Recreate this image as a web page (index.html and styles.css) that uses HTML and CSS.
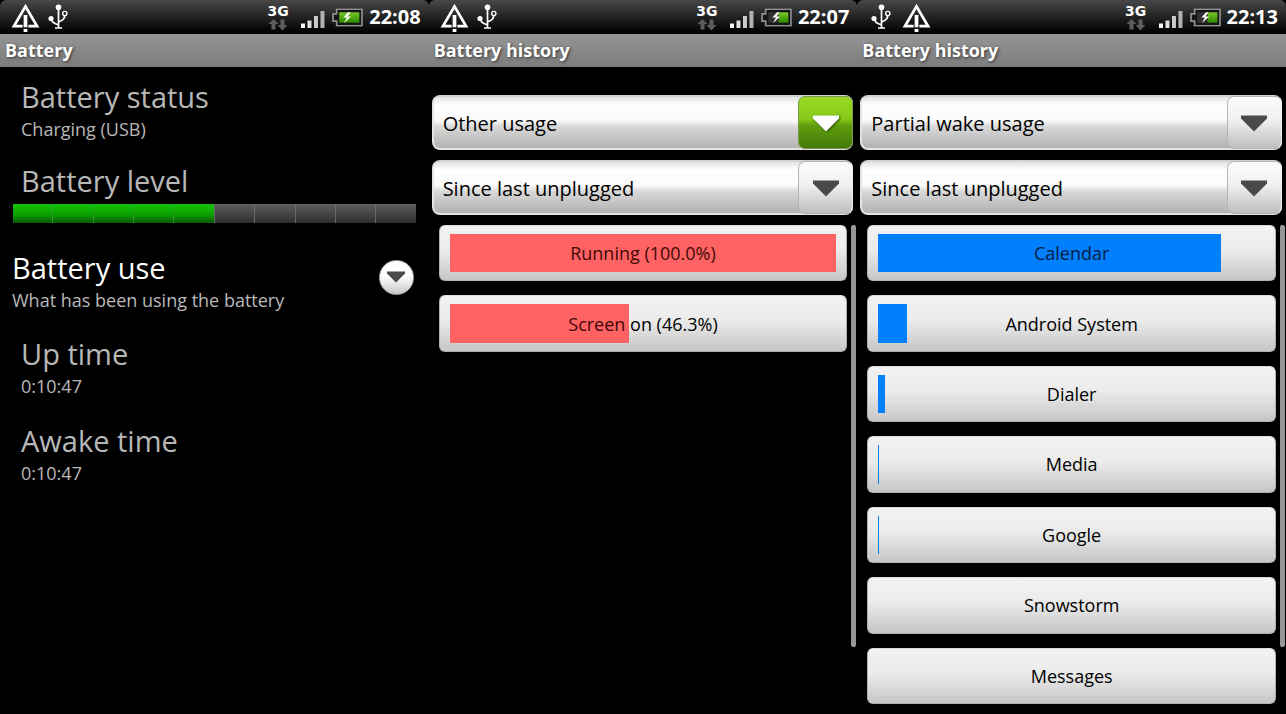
FILE: index.html
```html
<!DOCTYPE html>
<html lang="en">
<head>
<meta charset="utf-8">
<title>Battery</title>
<link rel="stylesheet" href="styles.css">
</head>
<body>
<svg class="defs" aria-hidden="true">
  <defs>
    <linearGradient id="cell" x1="0" y1="0" x2="0" y2="1">
      <stop offset="0" stop-color="#7ccb2c"/><stop offset=".5" stop-color="#4ea80e"/><stop offset="1" stop-color="#2f8a00"/>
    </linearGradient>
    <linearGradient id="signal-fill" x1="0" y1="0" x2="1" y2="0">
      <stop offset="0" stop-color="#fff"/><stop offset="1" stop-color="#aaa"/>
    </linearGradient>
    <symbol id="alert" viewBox="0 0 28 28">
      <path d="M14 3.200 L25.200 22.400 H2.800 Z" fill="none" stroke="#fff" stroke-width="2.600"/>
      <path d="M11.200 13h5.600v14h-5.600z" fill="#181818"/>
      <path d="M12.200 11.500h3.600v12h-3.600zM12.200 25h3.600v3h-3.600z" fill="#fff"/>
    </symbol>
    <symbol id="usb" viewBox="0 0 20 26">
      <path d="M10.500 3v21M3 14c0 4 3 5.500 7.500 7M16.500 10c1 4-1.500 6.500-6 8M7 24h7" fill="none" stroke="#fff" stroke-width="1.700"/>
      <circle cx="10.500" cy="3.200" r="2.800" fill="#fff"/>
      <circle cx="3" cy="14.500" r="2.600" fill="#fff"/>
      <circle cx="16.800" cy="9.500" r="2.100" fill="#222" stroke="#fff" stroke-width="1.400"/>
    </symbol>
    <symbol id="traffic" viewBox="0 0 20 13">
      <path d="M5.500 1l5 5H7.500v5.500h-4V6H0.500zM14.500 12.500l-5-5.500h3V1.500h4V7h3z" fill="#5c5c5c"/>
    </symbol>
    <symbol id="signal" viewBox="0 0 24 18">
      <path d="M0 13.500h4V18H0zM6.500 10.500h4V18h-4zM13 6h4v12h-4zM19.500 1h4v17h-4z" fill="url(#signal-fill)"/>
    </symbol>
    <symbol id="battery-frame" viewBox="0 0 30 18">
      <path d="M4.500 1h24.500v16H4.500v-4.500H1v-7h3.500z" fill="#151515" stroke="#929292" stroke-width="1.600"/>
    </symbol>
    <symbol id="bolt" viewBox="0 0 30 18">
      <path d="M15.500 4l-4.500 5h3.500l-3 5.500 7-6.500h-3.500l3-4z" fill="#fff"/>
    </symbol>
  </defs>
</svg>
<main class="screens">

  <section class="screen">
    <header class="status">
      <div class="notices"><svg class="alert"><use href="#alert"/></svg><svg class="usb"><use href="#usb"/></svg></div>
      <div class="network"><span>3G</span><svg class="traffic"><use href="#traffic"/></svg></div>
      <svg class="signal"><use href="#signal"/></svg>
      <svg class="battery" viewBox="0 0 30 18"><use href="#battery-frame"/><path d="M7 4h19.500v10H7z" fill="url(#cell)"/><use href="#bolt"/></svg>
      <time class="clock">22:08</time>
    </header>
    <h1 class="title">Battery</h1>
    <div class="settings">
      <div class="setting"><h2 class="name">Battery status</h2><p class="value">Charging (USB)</p></div>
      <div class="setting level">
        <h2 class="name" id="level">Battery level</h2>
        <div class="cells" role="img" aria-labelledby="level">
          <i class="cell on"></i><i class="cell on"></i><i class="cell on"></i><i class="cell on"></i><i class="cell on"></i><i class="cell"></i><i class="cell"></i><i class="cell"></i><i class="cell"></i><i class="cell"></i>
        </div>
      </div>
      <button class="setting use" type="button">
        <span class="texts"><span class="name">Battery use</span><span class="value">What has been using the battery</span></span>
        <span class="more"><svg class="small-arrow" viewBox="0 0 20 12"><path d="M1 0.500h18v2L10 11.500 1 2.500z" fill="#4b4b4b"/></svg></span>
      </button>
      <div class="setting"><h2 class="name">Up time</h2><p class="value">0:10:47</p></div>
      <div class="setting"><h2 class="name">Awake time</h2><p class="value">0:10:47</p></div>
    </div>
  </section>

  <section class="screen">
    <header class="status">
      <div class="notices"><svg class="alert"><use href="#alert"/></svg><svg class="usb"><use href="#usb"/></svg></div>
      <div class="network"><span>3G</span><svg class="traffic"><use href="#traffic"/></svg></div>
      <svg class="signal"><use href="#signal"/></svg>
      <svg class="battery" viewBox="0 0 30 18"><use href="#battery-frame"/><path d="M7 4h10v10H7z" fill="#333"/><path d="M17 4h9.500v10H17z" fill="url(#cell)"/><use href="#bolt"/></svg>
      <time class="clock">22:07</time>
    </header>
    <h1 class="title">Battery history</h1>
    <div class="history">
      <div class="picker active">
        <select class="select" aria-label="Usage type"><option>Other usage</option></select>
        <span class="drop"><svg class="arrow" viewBox="0 0 28 17"><path d="M1 .5h26v3L14 16.500 1 3.500z" fill="currentColor"/></svg></span>
      </div>
      <div class="picker">
        <select class="select" aria-label="Period"><option>Since last unplugged</option></select>
        <span class="drop"><svg class="arrow" viewBox="0 0 28 17"><path d="M1 .5h26v3L14 16.500 1 3.500z" fill="currentColor"/></svg></span>
      </div>
      <div class="scroller">
        <div class="list red">
          <button class="item" type="button"><span class="track"><span class="bar" style="width:100%"></span><span class="label"><span class="tinted">Running (100.0%)</span></span></span></button>
          <button class="item" type="button"><span class="track"><span class="bar" style="width:46.3%"></span><span class="label"><span class="tinted">Screen</span> on (46.3%)</span></span></button>
        </div>
        <div class="scrollbar"></div>
      </div>
    </div>
  </section>

  <section class="screen">
    <header class="status">
      <div class="notices usb-first"><svg class="usb"><use href="#usb"/></svg><svg class="alert"><use href="#alert"/></svg></div>
      <div class="network"><span>3G</span><svg class="traffic"><use href="#traffic"/></svg></div>
      <svg class="signal"><use href="#signal"/></svg>
      <svg class="battery" viewBox="0 0 30 18"><use href="#battery-frame"/><path d="M7 4h10v10H7z" fill="#333"/><path d="M17 4h9.500v10H17z" fill="url(#cell)"/><use href="#bolt"/></svg>
      <time class="clock">22:13</time>
    </header>
    <h1 class="title">Battery history</h1>
    <div class="history">
      <div class="picker">
        <select class="select" aria-label="Usage type"><option>Partial wake usage</option></select>
        <span class="drop"><svg class="arrow" viewBox="0 0 28 17"><path d="M1 .5h26v3L14 16.500 1 3.500z" fill="currentColor"/></svg></span>
      </div>
      <div class="picker">
        <select class="select" aria-label="Period"><option>Since last unplugged</option></select>
        <span class="drop"><svg class="arrow" viewBox="0 0 28 17"><path d="M1 .5h26v3L14 16.500 1 3.500z" fill="currentColor"/></svg></span>
      </div>
      <div class="scroller">
        <div class="list blue">
          <button class="item" type="button"><span class="track"><span class="bar" style="width:88.6%"></span><span class="label"><span class="tinted">Calendar</span></span></span></button>
          <button class="item" type="button"><span class="track"><span class="bar" style="width:7.4%"></span><span class="label">Android System</span></span></button>
          <button class="item" type="button"><span class="track"><span class="bar" style="width:1.8%"></span><span class="label">Dialer</span></span></button>
          <button class="item" type="button"><span class="track"><span class="bar" style="width:0.3%"></span><span class="label">Media</span></span></button>
          <button class="item" type="button"><span class="track"><span class="bar" style="width:0.3%"></span><span class="label">Google</span></span></button>
          <button class="item" type="button"><span class="track"><span class="label">Snowstorm</span></span></button>
          <button class="item" type="button"><span class="track"><span class="label">Messages</span></span></button>
        </div>
        <div class="scrollbar"></div>
      </div>
    </div>
  </section>

</main>
</body>
</html>
```

FILE: styles.css
```css
* { box-sizing: border-box; }

body {
  margin: 0;
  background: #000;
  color: #b8b8b8;
  font-family: "Open Sans", "Noto Sans", sans-serif;
}

h1, h2, p { margin: 0; font-weight: 400; }
button, select { font-family: inherit; border: 0; padding: 0; margin: 0; }
.defs { position: absolute; width: 0; height: 0; }

.screens {
  display: grid;
  grid-template-columns: repeat(3, minmax(0, 1fr));
  min-height: 100vh;
}

.screen { display: flex; flex-direction: column; }

/* Status bar */
.status {
  display: flex;
  align-items: center;
  height: 34px;
  padding: 0 8px 0 11px;
  background: linear-gradient(#484848, #262626 45%, #050505 90%, #000);
}
.screen .status { border-radius: 6px 6px 0 0; }
.notices { display: flex; align-items: center; gap: 8px; flex: 1; }
.notices.usb-first { gap: 11px; padding-left: 3px; }
.alert { width: 29px; height: 29px; }
.usb { width: 20px; height: 26px; }
.network {
  display: flex;
  flex-direction: column;
  align-items: center;
  width: 22px;
  margin-right: 12px;
  color: #fff;
  font: 700 14px/14px "DejaVu Sans", sans-serif;
}
.traffic { width: 20px; height: 13px; }
.signal { width: 24px; height: 18px; margin: 4px 7px 0 0; }
.battery { width: 31px; height: 19px; }
.clock {
  margin-left: 6px;
  color: #fff;
  font-size: 20px;
  font-weight: 700;
  line-height: 34px;
}

.title {
  height: 33px;
  padding-left: 5px;
  background: linear-gradient(#959595, #7c7c7c);
  color: #fff;
  font-size: 18px;
  font-weight: 700;
  line-height: 32px;
  text-shadow: 1px 1px 3px #333;
}

/* Settings list */
.setting {
  display: block;
  padding: 12px 13px 13px 21px;
}
.name { display: block; font-size: 29px; line-height: 36px; }
.value { display: block; margin-top: 2px; font-size: 18px; line-height: 24px; }
.level { padding: 9px 13px 15px; }
.level .name { padding-left: 8px; }
.cells { display: flex; height: 19px; margin-top: 5px; }
.cell {
  flex: 1;
  border-left: 1px solid #6a6a6a;
  background: linear-gradient(#5e5e5e, #2e2e2e);
}
.cell.on { border-left-color: #2a9c20; background: linear-gradient(#14c408, #0aa000 55%, #0a5a04); }
.cell:first-child { border-left: 0; }
.use {
  display: flex;
  justify-content: space-between;
  align-items: center;
  width: 100%;
  padding: 12px 15px 12px 12px;
  background: none;
  color: #b8b8b8;
  text-align: left;
}
.use .name { color: #fff; }
.more {
  display: flex;
  align-items: center;
  justify-content: center;
  width: 35px;
  height: 35px;
  margin-bottom: 8px;
  border-radius: 50%;
  border: 1px solid #aaa;
  background: linear-gradient(#fff 45%, #c8c8c8);
}
.small-arrow { width: 20px; height: 12px; }

/* History screens */
.history {
  flex: 1;
  display: flex;
  flex-direction: column;
  gap: 10px;
  padding: 28px 0 10px 3px;
}
.picker {
  position: relative;
  height: 55px;
  margin-right: 4px;
}
.select {
  appearance: none;
  width: 100%;
  height: 100%;
  padding: 2px 60px 0 9px;
  border: 2px solid #e4e4e4;
  border-top-color: #d2d2d2;
  border-radius: 8px;
  background: linear-gradient(#e4e4e4, #fff 16%, #fafafa 46%, #d8d8d8 58%, #b2b2b2);
  color: #000;
  font-size: 20px;
}
.drop {
  position: absolute;
  top: 1px;
  right: 0;
  bottom: 1px;
  display: flex;
  align-items: center;
  justify-content: center;
  width: 55px;
  padding-top: 2px;
  border: 1px solid #b4b4b4;
  border-right-color: #eee;
  border-radius: 7px;
  background: linear-gradient(#fcfcfc, #f0f0f0 45%, #bebebe);
  color: #4a4a4a;
  pointer-events: none;
}
.active .drop {
  border-color: #7a9a4c;
  background: linear-gradient(#9ada24, #86c81a 44%, #5f9e0e 56%, #447808);
  color: #fff;
}
.arrow { width: 28px; height: 17px; }
.active .arrow { filter: drop-shadow(1px 1px 1px #2c5200); }

.scroller { flex: 1; display: flex; gap: 4px; padding: 0 1px 0 7px; }
.list {
  flex: 1;
  display: grid;
  grid-template-rows: repeat(7, minmax(56px, 1fr));
  gap: 14px;
}
.item {
  padding: 8px 10px;
  border: 1px solid #b0b0b0;
  border-top-color: #ddd;
  border-radius: 6px;
  background: linear-gradient(#f2f2f2, #ebebeb 45%, #c6c6c6);
}
.track { display: grid; height: 100%; align-items: center; }
.bar, .label { grid-area: 1 / 1; }
.bar { height: 100%; }
.red .bar { background: #ff6262; }
.blue .bar { background: #0080ff; }
.label { color: #000; font-size: 18px; line-height: 24px; text-align: center; }
.red .tinted { color: #400808; }
.blue .tinted { color: #001a40; }
.scrollbar {
  width: 5px;
  height: 88%;
  border-radius: 2px;
  background: #969696;
}
```
